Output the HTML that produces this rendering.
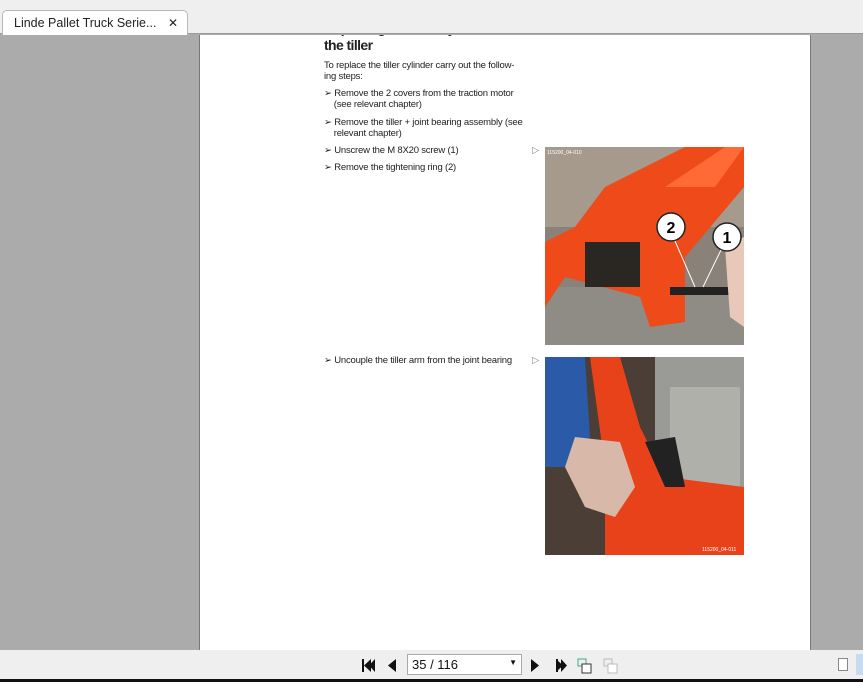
<!DOCTYPE html>
<html><head><style>
*{margin:0;padding:0;box-sizing:border-box}
body{width:863px;height:682px;overflow:hidden;background:#ababab;position:relative;font-family:"Liberation Sans",sans-serif}
.top{position:absolute;left:0;top:0;width:863px;height:34px;background:#efefef;border-bottom:1px solid #9a9a9a}
.tab{position:absolute;left:2px;top:10px;width:186px;height:25px;background:#fff;border:1px solid #b8b8b8;border-bottom:none;border-radius:5px 5px 0 0;font-size:12.5px;color:#222;padding:5px 0 0 11px}
.tab span{position:absolute;right:9px;top:5px;font-size:12px}
.page{position:absolute;left:199px;top:35px;width:612px;height:615px;background:#fff;border-left:1px solid #777;border-right:1px solid #777;overflow:hidden}
.t{position:absolute;font-size:9.5px;color:#222;letter-spacing:-0.2px;line-height:11px;white-space:nowrap}
.bar{position:absolute;left:0;top:650px;width:863px;height:29px;background:#efefef}
.bot{position:absolute;left:0;top:679px;width:863px;height:3px;background:#111}
</style></head><body>
<div class="top"><div class="tab">Linde Pallet Truck Serie...<span>✕</span></div></div>
<div class="page">
<div class="t" style="left:124px;top:-12px;font-size:14px;font-weight:bold;letter-spacing:-0.6px">Replacing the tiller cylinder on the</div>
<div class="t" style="left:124px;top:3px;font-size:14px;font-weight:bold;letter-spacing:-0.6px;background:#fff;line-height:15px;width:220px">the tiller</div>
<div class="t" style="left:124px;top:25px">To replace the tiller cylinder carry out the follow-<br>ing steps:</div>
<div class="t" style="left:124px;top:53px">➢ Remove the 2 covers from the traction motor<br>&nbsp;&nbsp;&nbsp;&nbsp;(see relevant chapter)</div>
<div class="t" style="left:124px;top:82px">➢ Remove the tiller + joint bearing assembly (see<br>&nbsp;&nbsp;&nbsp;&nbsp;relevant chapter)</div>
<div class="t" style="left:124px;top:110px">➢ Unscrew the M 8X20 screw (1)</div>
<div class="t" style="left:124px;top:127px">➢ Remove the tightening ring (2)</div>
<div class="t" style="left:124px;top:320px">➢ Uncouple the tiller arm from the joint bearing</div>
<div class="t" style="left:332px;top:110px;color:#888">▷</div>
<div class="t" style="left:332px;top:320px;color:#888">▷</div>
<svg style="position:absolute;left:345px;top:112px" width="199" height="198" viewBox="0 0 199 198">
<rect width="199" height="198" fill="#8a8178"/>
<rect y="0" width="199" height="80" fill="#a59a8c"/>
<rect y="140" width="199" height="58" fill="#8f8c86"/>
<path d="M60 40 L140 0 L199 0 L199 40 L140 110 L140 175 L105 180 L95 150 L20 130 L0 160 L0 95 L30 80 Z" fill="#ee4a1a"/>
<path d="M120 40 L180 0 L199 0 L170 40 Z" fill="#ff6a36"/>
<rect x="40" y="95" width="55" height="45" fill="#2a2622"/>
<rect x="125" y="140" width="74" height="8" fill="#222"/>
<path d="M180 100 L199 90 L199 180 L185 170 Z" fill="#e8c8b8"/>
<text x="2" y="7" font-size="5" fill="#fff" font-family="Liberation Sans">115200_04-010</text>
<circle cx="126" cy="80" r="14" fill="#fff" stroke="#222" stroke-width="1.5"/>
<text x="126" y="86" font-size="16" font-weight="bold" text-anchor="middle" font-family="Liberation Sans">2</text>
<circle cx="182" cy="90" r="14" fill="#fff" stroke="#222" stroke-width="1.5"/>
<text x="182" y="96" font-size="16" font-weight="bold" text-anchor="middle" font-family="Liberation Sans">1</text>
<line x1="130" y1="94" x2="150" y2="140" stroke="#fff"/><line x1="176" y1="103" x2="158" y2="140" stroke="#fff"/>
</svg>
<svg style="position:absolute;left:345px;top:322px" width="199" height="198" viewBox="0 0 199 198">
<rect width="199" height="198" fill="#4a3e36"/>
<rect x="110" y="0" width="89" height="145" fill="#9a9a96"/>
<rect x="125" y="30" width="70" height="100" fill="#b0b0aa"/>
<path d="M45 0 L75 0 L95 70 L120 120 L199 130 L199 198 L60 198 L60 110 Z" fill="#e8421a"/>
<path d="M0 0 L40 0 L45 80 L20 110 L0 110 Z" fill="#2a5aa8"/>
<path d="M30 80 L75 85 L90 130 L70 160 L40 150 L20 110 Z" fill="#d8b8a8"/>
<path d="M100 85 L130 80 L140 130 L120 130 Z" fill="#222"/>
<text x="157" y="194" font-size="5" fill="#fff" font-family="Liberation Sans">115200_04-011</text>
</svg>
</div>
<div class="bar">
<svg style="position:absolute;left:360px;top:8px" width="260" height="16">
<rect x="2" y="1" width="2" height="13" fill="#111"/><path d="M11 1 L4 7.5 L11 14 Z" fill="#111"/><path d="M15 1 L9 7.5 L15 14 Z" fill="#111"/>
<path d="M36 1 L28 7.5 L36 14 Z" fill="#111"/>
<path d="M171 1 L179 7.5 L171 14 Z" fill="#111"/>
<path d="M196 1 L203 7.5 L196 14 Z" fill="#111"/><path d="M201 1 L207 7.5 L201 14 Z" fill="#111"/><rect x="196" y="1" width="2" height="13" fill="#111"/>
<rect x="218" y="1" width="8" height="7" fill="none" stroke="#4a8" /><rect x="222" y="6" width="9" height="9" fill="#fff" stroke="#333"/>
<rect x="244" y="1" width="8" height="7" fill="none" stroke="#bbb"/><rect x="248" y="6" width="9" height="9" fill="#fff" stroke="#bbb"/>
</svg>
<div style="position:absolute;left:407px;top:4px;width:115px;height:21px;background:#fff;border:1px solid #aaa;font-size:13px;padding:2px 0 0 4px;color:#111">35 / 116<span style="position:absolute;right:4px;top:3px;font-size:8px">▼</span></div>
<div style="position:absolute;left:838px;top:8px;width:10px;height:13px;border:1px solid #888;background:#fff"></div>
<div style="position:absolute;left:856px;top:4px;width:7px;height:21px;background:#c8daf0"></div>
</div>
<div class="bot"></div>
</body></html>
